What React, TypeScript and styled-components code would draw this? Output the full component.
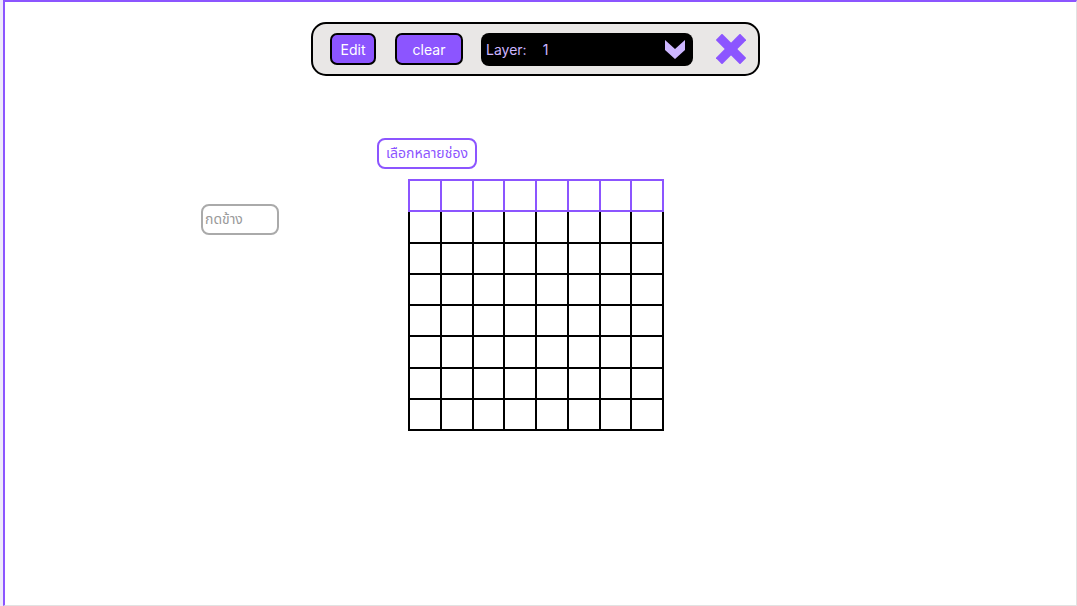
import React from 'react';
import styled, { createGlobalStyle } from 'styled-components';

const purple = '#8c55ff';
const lavender = '#cdb6ff';

const GlobalStyle = createGlobalStyle`
  html, body {
    margin: 0;
    padding: 0;
    background: #fff;
    font-family: Inter, "Noto Sans", "Noto Sans Thai", sans-serif;
  }
`;

// thin lavender strip left of the frame
const Page = styled.div`
  padding-left: 3px;
  height: 606px;
  box-sizing: border-box;
  background: linear-gradient(to right, #eee9fb 0, #eee9fb 3px, transparent 3px);
`;

const Frame = styled.div`
  height: 606px;
  box-sizing: border-box;
  border-left: 2px solid ${purple};
  border-top: 2px solid ${purple};
  border-right: 1px solid #e2e2e2;
  border-bottom: 1px solid #e2e2e2;
  padding-top: 20px;
`;

const Toolbar = styled.div`
  width: 449px;
  height: 54px;
  margin-left: 306px;
  box-sizing: border-box;
  border: 2px solid #000;
  border-radius: 15px;
  background: #e9e7e6;
  display: flex;
  align-items: center;
  padding-left: 17px;
`;

const ToolButton = styled.button<{ $w: number; $gap: number }>`
  width: ${(p) => p.$w}px;
  height: 32px;
  margin-right: ${(p) => p.$gap}px;
  box-sizing: border-box;
  border: 2px solid #000;
  border-radius: 7px;
  background: ${purple};
  color: #fff;
  font-family: Inter, sans-serif;
  font-size: 14px;
  padding: 0;
`;

const LayerSelect = styled.div`
  width: 212px;
  height: 33px;
  border-radius: 8px;
  background: #000;
  color: ${lavender};
  display: flex;
  align-items: center;
  padding: 0 8px 0 5px;
  box-sizing: border-box;
  font-size: 14px;
  margin-right: 23px;
`;

const LayerLabel = styled.span`
  margin-right: 16px;
`;

const LayerValue = styled.span`
  flex: 1;
`;

const Content = styled.div`
  display: flex;
  margin-top: 62px;
`;

const SideButton = styled.div`
  margin-left: 196px;
  margin-top: 66px;
  width: 78px;
  height: 31px;
  box-sizing: border-box;
  border: 2px solid #aaa;
  border-radius: 8px;
  color: #9a9a9a;
  font-size: 14px;
  display: flex;
  align-items: center;
  padding-left: 2px;
  align-self: flex-start;
`;

const GridColumn = styled.div`
  margin-left: 98px;
  display: flex;
  flex-direction: column;
  align-items: flex-start;
`;

const MultiLabel = styled.div`
  height: 31px;
  box-sizing: border-box;
  border: 2px solid ${purple};
  border-radius: 8px;
  color: ${purple};
  font-size: 14px;
  display: flex;
  align-items: center;
  justify-content: center;
  width: 100px;
`;

const GridBox = styled.div`
  margin-top: 10px;
  margin-left: 31px;
  border-left: 2px solid #000;
`;

const HeadRow = styled.div`
  display: flex;
  border-left: 2px solid ${purple};
  margin-left: -2px;
`;

const HeadCell = styled.div`
  width: 31.75px;
  height: 33.25px;
  box-sizing: border-box;
  border-top: 2px solid ${purple};
  border-right: 2px solid ${purple};
  border-bottom: 2px solid ${purple};
`;

const BodyGrid = styled.div`
  display: grid;
  grid-template-columns: repeat(8, 31.75px);
  grid-template-rows: repeat(7, 31.25px);
`;

const BodyCell = styled.div`
  box-sizing: border-box;
  border-right: 2px solid #000;
  border-bottom: 2px solid #000;
`;

const Chevron = () => (
  <svg width="20" height="19" viewBox="0 0 20 19">
    <polygon points="0,0 10,9 20,0 20,10 10,19 0,10" fill={lavender} />
  </svg>
);

const CloseIcon = () => (
  <svg width="30" height="30" viewBox="0 0 30 30">
    <g stroke={purple} strokeWidth="9" strokeLinecap="square">
      <line x1="6" y1="6" x2="24" y2="24" />
      <line x1="24" y1="6" x2="6" y2="24" />
    </g>
  </svg>
);

export default function App() {
  const cols = Array.from({ length: 8 });
  const cells = Array.from({ length: 56 });
  return (
    <>
      <GlobalStyle />
      <Page>
        <Frame>
          <Toolbar>
            <ToolButton $w={46} $gap={19}>Edit</ToolButton>
            <ToolButton $w={68} $gap={18}>clear</ToolButton>
            <LayerSelect>
              <LayerLabel>Layer:</LayerLabel>
              <LayerValue>1</LayerValue>
              <Chevron />
            </LayerSelect>
            <CloseIcon />
          </Toolbar>
          <Content>
            <SideButton>กดข้าง</SideButton>
            <GridColumn>
              <MultiLabel>เลือกหลายช่อง</MultiLabel>
              <GridBox>
                <HeadRow>
                  {cols.map((_, i) => (
                    <HeadCell key={i} />
                  ))}
                </HeadRow>
                <BodyGrid>
                  {cells.map((_, i) => (
                    <BodyCell key={i} />
                  ))}
                </BodyGrid>
              </GridBox>
            </GridColumn>
          </Content>
        </Frame>
      </Page>
    </>
  );
}
